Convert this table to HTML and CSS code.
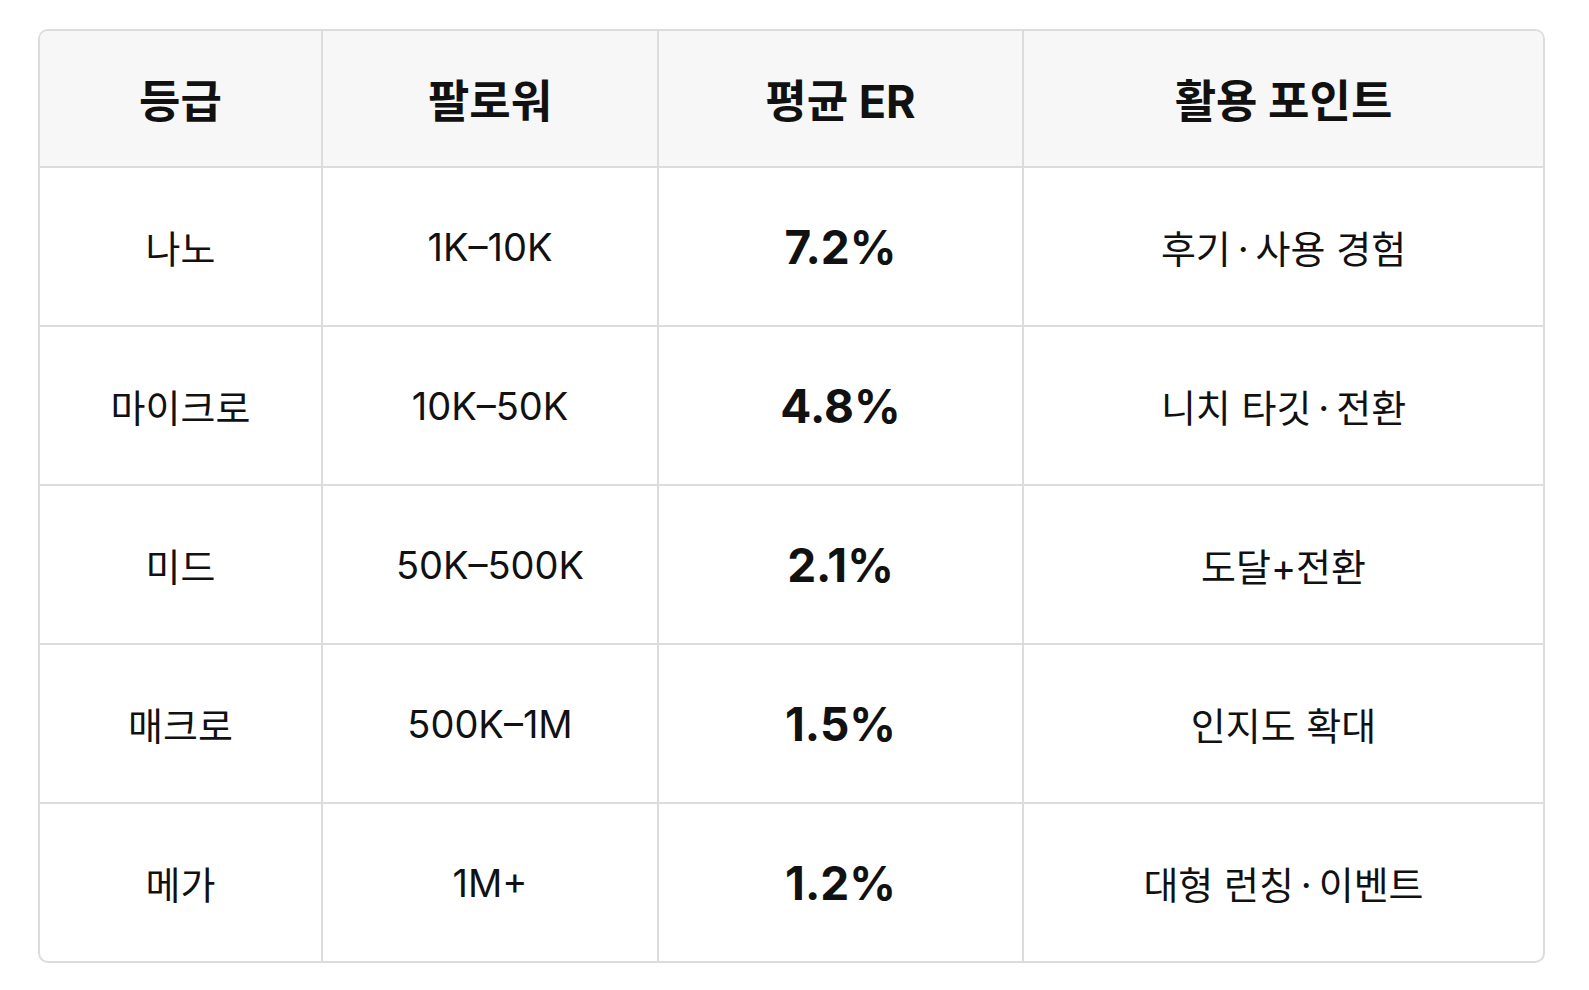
FILE: index.html
```html
<!DOCTYPE html>
<html lang="ko">
<head>
<meta charset="utf-8">
<title>인플루언서 등급별 평균 ER</title>
<link rel="stylesheet" href="styles.css">
</head>
<body>
<div class="card">
  <table class="tier-table">
    <colgroup>
      <col class="c1"><col class="c2"><col class="c3"><col class="c4">
    </colgroup>
    <thead>
      <tr>
        <th>등급</th>
        <th>팔로워</th>
        <th>평균 ER</th>
        <th>활용 포인트</th>
      </tr>
    </thead>
    <tbody>
      <tr><td>나노</td><td>1K–10K</td><td class="er">7.2%</td><td>후기&thinsp;·&thinsp;사용 경험</td></tr>
      <tr><td>마이크로</td><td>10K–50K</td><td class="er">4.8%</td><td>니치 타깃&thinsp;·&thinsp;전환</td></tr>
      <tr><td>미드</td><td>50K–500K</td><td class="er">2.1%</td><td>도달+전환</td></tr>
      <tr><td>매크로</td><td>500K–1M</td><td class="er">1.5%</td><td>인지도 확대</td></tr>
      <tr><td>메가</td><td>1M+</td><td class="er">1.2%</td><td>대형 런칭&thinsp;·&thinsp;이벤트</td></tr>
    </tbody>
  </table>
</div>
</body>
</html>
```

FILE: styles.css
```css
html, body {
  margin: 0;
  padding: 0;
  background: #ffffff;
}

body {
  font-family: Inter, "Noto Sans CJK KR", "Noto Sans", sans-serif;
  color: #111111;
}

.card {
  box-sizing: border-box;
  width: 1507px;
  margin: 29px 0 0 38px;
  border: 2px solid #dcdcdc;
  border-radius: 10px;
  overflow: hidden;
  background: #ffffff;
}

.tier-table {
  width: 100%;
  table-layout: fixed;
  border-collapse: separate;
  border-spacing: 0;
}

.c1 { width: 283px; }
.c2 { width: 336px; }
.c3 { width: 365px; }
.c4 { width: 519px; }

.tier-table th,
.tier-table td {
  padding: 0;
  text-align: center;
  vertical-align: middle;
  border-right: 2px solid #dcdcdc;
  border-bottom: 2px solid #dcdcdc;
}

.tier-table th:last-child,
.tier-table td:last-child {
  border-right: none;
}

.tier-table tbody tr:last-child td {
  border-bottom: none;
}

.tier-table th {
  height: 135px;
  background: #f7f7f7;
  font-size: 45px;
  font-weight: 700;
}

.tier-table td {
  height: 157px;
  font-size: 38px;
  font-weight: 400;
}

.tier-table td.er {
  font-size: 46px;
  font-weight: 700;
}
```
